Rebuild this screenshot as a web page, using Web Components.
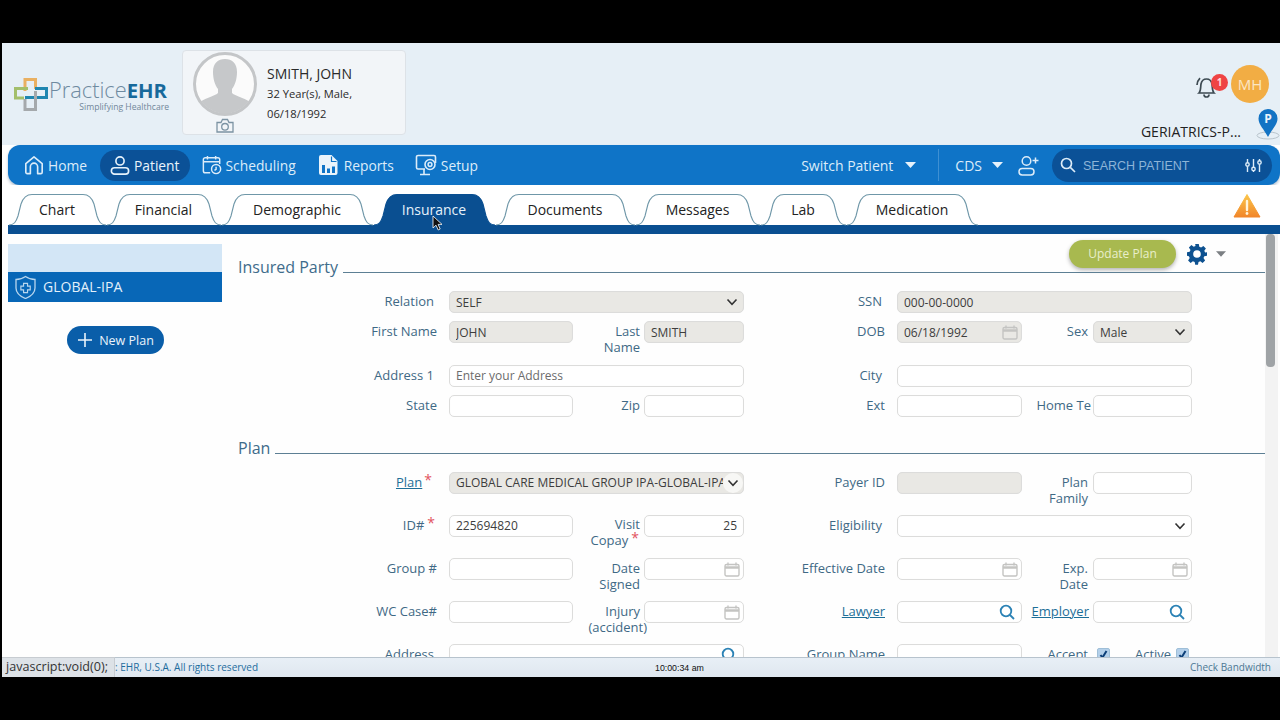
<!DOCTYPE html>
<html lang="en"><head><meta charset="utf-8"><title>PracticeEHR</title>
<style>
html,body{margin:0;padding:0;background:#000;height:720px;overflow:hidden;font-family:"Open Sans","Noto Sans",sans-serif}
body{padding-top:43px;box-sizing:border-box}
</style>
<script>
const define=(name,render)=>customElements.define(name,class extends HTMLElement{
  connectedCallback(){if(!this.shadowRoot){this.attachShadow({mode:'open'}).innerHTML=render(this)}}
});
const chevron=`<svg width="12" height="8" viewBox="0 0 12 8" fill="none" stroke="#333" stroke-width="1.6"><path d="M1.5 1.5 6 6.3l4.5-4.8"/></svg>`;
const calendar=`<svg width="16" height="15" viewBox="0 0 16 15" fill="none" stroke="#c4c4c2" stroke-width="1.4"><rect x="1" y="2.5" width="14" height="11.5" rx="1.5"/><path d="M1 5.5h14" stroke-width="2.4"/><path d="M4 .5v3M12 .5v3"/></svg>`;
const searchI=`<svg width="16" height="16" viewBox="0 0 16 16" fill="none" stroke="#2b82b5" stroke-width="1.8"><circle cx="7" cy="7" r="5.3"/><path d="m11 11 4 4"/></svg>`;
const caret=(c,w=11)=>`<svg width="${w}" height="6" viewBox="0 0 11 6" style="display:block"><path d="M0 0h11L5.5 6z" fill="${c}"/></svg>`;
const icons={
 home:`<svg width="20" height="22" viewBox="0 0 22 22" fill="none" stroke="#dcecf9" stroke-width="1.8" stroke-linejoin="round"><path d="M2 9.5 11 2l9 7.5V19a1.500 1.500 0 0 1-1.500 1.500H15V13a4 4 0 0 0-8 0v7.500H3.500A1.500 1.500 0 0 1 2 19z"/></svg>`,
 patient:`<svg width="20" height="22" viewBox="0 0 22 22" fill="none" stroke="#e6f2fb" stroke-width="1.800"><circle cx="11" cy="6.500" r="4.500"/><rect x="1.500" y="14" width="19" height="7" rx="3.500"/></svg>`,
 sched:`<svg width="20" height="22" viewBox="0 0 22 22" fill="none" stroke="#dcecf9" stroke-width="1.600"><path d="M9 19.500H3.500A2 2 0 0 1 1.500 17.500V5A2 2 0 0 1 3.500 3h14a2 2 0 0 1 2 2v5"/><path d="M1.500 7.500h18M6 1v4M15 1v4"/><circle cx="15.500" cy="15.500" r="5"/><path d="M15.500 13v2.700l-1.800 1.300"/></svg>`,
 reports:`<svg width="22" height="22" viewBox="0 0 22 22"><path d="M3 1h10.500l6 6V19a2 2 0 0 1-2 2H3a2 2 0 0 1-2-2V3a2 2 0 0 1 2-2z" fill="#eaf4fb"/><path d="M13.500 2.500v5h5" fill="none" stroke="#0f74c7" stroke-width="1.200"/><path d="M4 11h3v8H4zM9 14.500h3V19H9zM14 12.500h3V19h-3z" fill="#0f74c7"/></svg>`,
 setup:`<svg width="22" height="22" viewBox="0 0 22 22" fill="none" stroke="#dcecf9" stroke-width="1.600"><path d="M20.500 9V3A1.500 1.500 0 0 0 19 1.500H3A1.500 1.500 0 0 0 1.500 3v10.500A1.500 1.500 0 0 0 3 15h7"/><path d="M5 20.500h10M9 15v5.500"/><circle cx="15" cy="10.500" r="5"/><circle cx="15" cy="10.500" r="1.900" stroke-width="1.500"/></svg>`
};
define('ehr-app',()=>`<style>:host{display:flex;flex-direction:column;height:634px;margin-left:2px;background:#fff;overflow:hidden;position:relative}</style><slot></slot>`);

define('app-header',()=>`<style>:host{display:flex;height:102px;background:#e6eff6;position:relative;flex:none}
.l{padding:7px 0 0 180px;display:flex}
.r{margin-left:auto;display:flex;flex-direction:column;align-items:flex-end}</style>
<slot name="logo"></slot><div class="l"><slot name="card"></slot></div><div class="r"><slot name="tools"></slot></div>`);

define('ehr-logo',()=>`<style>:host{position:absolute;left:12px;top:34px;display:flex;width:155px;color:#6b8497}
svg{flex:none;margin-right:1px}
.t{display:flex;flex-direction:column;align-items:flex-end;width:120px}
.n{width:120px;font-size:21.800px;line-height:26px;font-weight:300;color:#6e8aa0;white-space:nowrap;font-family:"Open Sans"}
b{color:#17699b;font-weight:700;font-size:20.300px}
.s{font-size:8.600px;line-height:9px;color:#71879a}</style>
<svg width="34" height="34" viewBox="0 0 34 34" fill="none" stroke-width="3"><path d="M11 14V2.500h10.500V12" stroke="#e9b062"/><path d="M14 11.500H1.500V21H10" stroke="#a3bf6c"/><path d="M21 11.500h11.500V20.500H11" stroke="#1f86b0"/><path d="M11 22v10.500h10.500V14" stroke="#a5a9ac"/></svg>
<div class="t"><div class="n">Practice<b>EHR</b></div><div class="s">Simplifying Healthcare</div></div>`);

define('patient-card',()=>`<style>:host{display:flex;box-sizing:border-box;width:224px;height:85px;background:#f2f5f8;border:1px solid #dde2e7;border-radius:4px;position:relative;color:#222}
.a{width:84px;flex:none;display:flex;flex-direction:column;align-items:center;padding-top:1px}
.n{font-size:14px;line-height:20px;margin-top:13px;color:#2a2a2a}
.d{font-size:11.200px;line-height:20px;color:#2a2a2a}</style>
<div class="a"><svg width="64" height="64" viewBox="0 0 64 64"><defs><clipPath id="c"><circle cx="32" cy="32" r="29.500"/></clipPath></defs><circle cx="32" cy="32" r="30.500" fill="#fbfbfb" stroke="#c4c6c8" stroke-width="3"/><g clip-path="url(#c)" fill="#c6c8ca"><path d="M20 20c0-9 5-13 12-13s12 4 12 13c0 7-2 13-5 17v4c3 3 16 6 20 11v12H5V52c4-5 17-8 20-11v-4c-3-4-5-10-5-17z"/></g></svg>
<svg width="18" height="15" viewBox="0 0 18 15" fill="none" stroke="#7c93a3" stroke-width="1.300" style="margin-top:2px"><path d="M1 4.500h4L6.500 1.500h5L13 4.500h4V14H1z"/><circle cx="9" cy="8.800" r="3.300"/></svg></div>
<div class="i"><div class="n"><slot name="name"></slot></div><div class="d"><slot name="age"></slot></div><div class="d"><slot name="dob"></slot></div></div>`);

define('header-tools',()=>`<style>:host{display:block;height:102px;position:relative;width:140px}
.row{display:flex;justify-content:flex-end;align-items:center;padding:22px 11px 0 0;height:38px}
.bell{position:relative;width:30px;height:30px;margin-top:5px}
.badge{position:absolute;left:18px;top:2px;width:17px;height:17px;border-radius:50%;background:#ef4444;color:#ffdcdc;font-size:10px;font-weight:700;line-height:17px;text-align:center}
.mh{width:38px;height:38px;border-radius:50%;background:#f2ad44;color:#fbe6c4;font-size:15px;line-height:38px;text-align:center;margin-left:8px}
.loc{display:flex;justify-content:flex-end;align-items:flex-end;height:30px;margin-top:7px}
.g{font-size:14px;line-height:20px;color:#222;margin-right:15px;white-space:nowrap;margin-bottom:-2px}</style>
<div class="row"><div class="bell"><svg width="30" height="30" viewBox="0 0 30 30" fill="none" stroke="#3d4a52" stroke-width="1.700"><path d="M6 21c2-2 1.500-6 2-9 .6-3.200 3-5 5.500-5S18.400 8.800 19 12c.5 3 0 7 2 9z"/><path d="M11 22.500a2.500 2.500 0 0 0 5 0"/><path d="M4 13c.2-3 1.200-5 3-6.800"/></svg><span class="badge">1</span></div><div class="mh">MH</div></div>
<div class="loc"><span class="g"><slot></slot></span><svg width="24" height="31" viewBox="0 0 24 31"><ellipse cx="12" cy="26.500" rx="11" ry="3.500" fill="none" stroke="#b9c4cc" stroke-width="1"/><path d="M12 28C8 20 2.500 16 2.500 9.500a9.500 9.500 0 0 1 19 0C21.500 16 16 20 12 28z" fill="#1273c4"/><text x="12" y="14" text-anchor="middle" font-family="Open Sans" font-size="12" font-weight="700" fill="#eaf4fb">P</text></svg></div>`);

define('main-nav',()=>`<style>:host{display:flex;align-items:center;flex:none;height:40px;margin-left:6px;padding-left:6px;background:#0f74c7;border-radius:12px;box-shadow:0 2px 3px rgba(0,50,100,.3);gap:2px;color:#dcecf9;position:relative;box-sizing:border-box}
.r{margin-left:auto;display:flex;align-items:center;padding-right:8px;font-size:14px}
.sw{margin-right:12px}.d{width:1px;height:32px;background:#3e90d3;margin:0 16px 0 22px}
.cds{margin-right:10px}.cd2{margin-right:15px}
.s{display:flex;align-items:center;box-sizing:border-box;width:220px;height:33px;margin-left:13px;border-radius:17px;background:#0b5197;padding:0 10px 0 8px;color:#8db4d8;font:12.500px "Liberation Sans",sans-serif}
.s span{margin-left:7px;padding-top:1px}.s svg:last-child{margin-left:auto}</style>
<slot></slot><div class="r"><span class="sw">Switch Patient</span>${caret('#e6f2fb')}<div class="d"></div><span class="cds">CDS</span><span class="cd2">${caret('#e6f2fb')}</span>
<svg width="21" height="21" viewBox="0 0 21 21" fill="none" stroke="#dcecf9" stroke-width="1.500"><circle cx="8.500" cy="6" r="4.300"/><rect x="1" y="13.500" width="15" height="6.500" rx="3.200"/><path d="M14.500 5.500h6M17.500 2.500v6"/></svg>
<div class="s"><svg width="16" height="16" viewBox="0 0 16 16" fill="none" stroke="#dcecf9" stroke-width="1.700"><circle cx="6.500" cy="6.500" r="5"/><path d="m10.300 10.300 4.700 4.700"/></svg><span><slot name="search"></slot></span>
<svg width="17" height="15" viewBox="0 0 17 15" fill="none" stroke="#dcecf9" stroke-width="1.400"><path d="M2.500 1v3.500M2.500 8.500V14M8.500 1v8M8.500 13v1M14.500 1v1.500M14.500 6.500V14"/><circle cx="2.500" cy="6.500" r="1.700"/><circle cx="8.500" cy="11" r="1.700"/><circle cx="14.500" cy="4.500" r="1.700"/></svg></div></div>`);

define('nav-item',h=>`<style>:host{display:flex;align-items:center;height:31px;padding:0 10px;gap:4px;border-radius:16px;font-size:13.800px;${h.hasAttribute('active')?'background:#0b5197;color:#eaf4fb;':''}white-space:nowrap}svg{display:block}</style>${icons[h.getAttribute('icon')]}<slot></slot>`);

define('tab-bar',()=>`<style>:host{display:flex;flex:none;height:40px;box-sizing:border-box;padding:9px 0 0 8.500px;gap:5px;background:#fff;position:relative;align-items:flex-end}
.w{margin-left:auto;margin-right:19px;align-self:flex-start;margin-top:-1px}</style><slot></slot><svg class="w" width="28" height="25" viewBox="0 0 28 25"><defs><linearGradient id="w" x1="0" y1="0" x2="0" y2="1"><stop offset="0" stop-color="#fbc64a"/><stop offset="1" stop-color="#f1862a"/></linearGradient></defs><path d="M14 1.500 27 24H1z" fill="url(#w)" stroke="url(#w)" stroke-linejoin="round"/><path d="M14 8v9" stroke="#fff5dc" stroke-width="2.400" stroke-linecap="round"/><circle cx="14" cy="20.500" r="1.400" fill="#fff5dc"/></svg>`);

define('tab-item',h=>{const w=+h.getAttribute('w'),a=h.hasAttribute('active');
 const d=`M-2 31C3 31 5 28 7 22L10 10C12 4 15 .5 21 .5L${w-21} .5C${w-15} .5 ${w-12} 4 ${w-10} 10L${w-7} 22C${w-5} 28 ${w-3} 31 ${w+2} 31`;
 return `<style>:host{display:flex;align-items:center;justify-content:center;position:relative;width:${w}px;height:31px;flex:none;font-size:14px;color:${a?'#e6f2fb':'#222'}}
svg{position:absolute;left:0;top:0;overflow:visible}span{position:relative}</style>
<svg width="${w}" height="31" viewBox="0 0 ${w} 31" fill="${a?'#0a4f91':'#fff'}" stroke="${a?'#0a4f91':'#6f97a8'}" stroke-width="1.100"><path d="${d}"/></svg><span><slot></slot></span>`});

define('blue-rule',()=>`<style>:host{display:block;flex:none;height:9px;margin-left:6px;background:#0a4f91}</style>`);

define('work-area',()=>`<style>:host{display:flex;flex:1;min-height:0;overflow:hidden;background:#fefefe}</style><slot></slot>`);

define('side-panel',()=>`<style>:host{display:block;flex:none;width:214px;margin-left:6px;padding-top:10px}
.t{height:28px;background:#d3e6f6}
.p{display:flex;align-items:center;height:30px;background:#0867b7;color:#e3f0fa;font-size:14px;font-weight:400;padding:0 0 2px 6px;box-sizing:border-box}
.p svg{margin:2px 6px 0 0}
.b{display:flex;align-items:center;justify-content:center;gap:6px;width:97px;height:28px;margin:24px 0 0 59px;border-radius:14px;background:#0a5ea9;color:#eaf4fb;font-size:12.500px}</style>
<div class="t"></div><div class="p"><svg width="23" height="24" viewBox="0 0 23 24" fill="none" stroke="#b8d6ee" stroke-width="1.300"><path d="M11.500 1.500c3 2.200 6 3 9.500 3V13c0 5-4.500 8.500-9.500 10.500C6.500 21.500 2 18 2 13V4.500c3.500 0 6.500-.8 9.500-3z"/><path d="M9.300 7.500h4.400v3h3v4.300h-3v3H9.300v-3h-3v-4.300h3z" transform="translate(1.200 1.600) scale(.9)"/></svg><slot name="plan"></slot></div>
<div class="b"><svg width="16" height="16" viewBox="0 0 16 16" stroke="#eaf4fb" stroke-width="1.600"><path d="M8 1v14M1 8h14"/></svg><slot name="btn"></slot></div>`);

define('form-pane',()=>`<style>:host{display:block;flex:1;min-width:0;padding:6px 0 0 16px;box-sizing:border-box;overflow:hidden;height:423px}</style><slot></slot>`);

define('plan-toolbar',()=>`<style>:host{display:flex;justify-content:flex-end;align-items:center;height:28px;padding-right:39px}
.b{width:107px;height:28px;border-radius:14px;background:#a8b94f;color:#e8eecb;font-size:12px;line-height:28px;text-align:center;box-shadow:0 2px 4px rgba(0,0,0,.3);margin-right:10px}
.c{margin:0 0 0 8px}</style><div class="b"><slot></slot></div>
<svg width="22" height="22" viewBox="0 0 22 22"><path fill="#0d5190" fill-rule="evenodd" d="M9.200 1h3.600l.5 2.700 1.800.8 2.300-1.600 2.500 2.500-1.600 2.300.8 1.800L21 9.200v3.600l-2.700.5-.8 1.800 1.600 2.300-2.500 2.500-2.300-1.600-1.800.8-.5 2.700H9.200l-.5-2.700-1.800-.8-2.300 1.600-2.500-2.500 1.600-2.300-.8-1.800L1 12.800V9.200l2.700-.5.8-1.800-1.600-2.300 2.500-2.500 2.300 1.600 1.800-.8zM11 7.200a3.800 3.800 0 1 0 0 7.600 3.800 3.800 0 0 0 0-7.600z"/></svg><span class="c">${caret('#7b7f83',10)}</span>`);

define('section-head',()=>`<style>:host{display:flex;height:22px;margin:var(--m,0) 0 13px;font-size:16px;line-height:22px;color:#3f6c8b;white-space:nowrap}
i{flex:1;height:1px;margin:16px 0 0 5px;background:#5d7f94}</style><slot></slot><i></i>`);

define('form-grid',h=>`<style>:host{display:grid;grid-template-columns:211px 124px 71px 100px 153px 125px 71px 99px;grid-template-rows:${h.getAttribute('rows')};row-gap:8px}</style><slot></slot>`);

define('req-star',()=>`<style>:host{color:#e2545f;font-size:14px;position:relative;top:-2px;margin:0 var(--r,0) 0 var(--l,3px)}</style>*`);

define('f-label',h=>`<style>:host{display:block;box-sizing:border-box;padding:2px ${h.getAttribute('pr')||(h.hasAttribute('wide')?15:12)}px 0 0;text-align:right;font-size:13px;line-height:16px;color:#3f6985;white-space:nowrap;overflow:${h.hasAttribute('clip')?'hidden':'visible'}}
a{color:#1d6f98;text-decoration:underline}</style>
${h.hasAttribute('link')?'<a><slot></slot></a>':'<slot></slot>'}<slot name="after"></slot>`);

define('f-input',h=>{const icon=h.getAttribute('icon'),dis=h.hasAttribute('disabled'),fade=h.hasAttribute('fade');
 const ic=icon=='select'?chevron:icon=='cal'?calendar:icon=='search'?searchI:'';
 const pad=icon=='select'?(fade?0:5):icon=='cal'?3:6;
 return `<style>:host{display:flex;align-items:center;grid-column:span ${h.getAttribute('span')||1};box-sizing:border-box;height:22px;border:1px solid #dcdcdb;border-radius:5px;background:${dis?'#e9e8e4':'#fff'};padding:0 ${pad}px 0 6px;font-size:12px;color:#3d3d3d;min-width:0;box-shadow:inset 0 0 1px rgba(0,0,0,.04);overflow:hidden}
.v{flex:1;min-width:0;overflow:hidden;white-space:nowrap;text-align:${h.getAttribute('align')||'left'}}.p{color:#6c6c6c}
.up{padding-bottom:2px}
.i{display:flex;flex:none;margin-left:2px;align-items:center;justify-content:center}
.f{width:20px;height:20px;margin:0;background:#f7f7f5;border-radius:10px}</style><div class="v ${h.hasAttribute('ph')?'p':''} ${h.hasAttribute('up')?'up':''}"><slot></slot></div>${ic?`<span class="i ${fade?'f':''}">${ic}</span>`:''}`});

define('f-check',()=>`<style>:host{display:inline-block;box-sizing:border-box;width:13px;height:13px;margin-top:2px;border-radius:2px;background:#b4d0ea;border:1px solid #9fbfd8}svg{display:block}</style><svg width="11" height="11" viewBox="0 0 11 11" fill="none" stroke="#0d3f78" stroke-width="2"><path d="m2.500 6 2 2.500L8.500 2"/></svg>`);
define('check-cell',()=>`<style>:host{display:flex;align-items:flex-start;font-size:13px;line-height:16px;color:#3f6985;padding:2px 0 0 4px;white-space:nowrap}.x{margin-left:25px;margin-right:5px}</style><slot name="a"></slot><span class="x"><slot name="l"></slot></span><slot name="b"></slot>`);

define('scroll-rail',()=>`<style>:host{display:block;flex:none;width:13px;margin-right:2px;background:#f3f3f3}i{display:block;width:9px;height:133px;margin-left:1px;border-radius:4px;background:#9fa3a6}</style><i></i>`);

define('status-bar',()=>`<style>:host{display:flex;align-items:center;flex:none;height:20px;box-sizing:border-box;border-top:1px solid #b7c3cd;background:linear-gradient(#e8eff6,#dfe7ef);font-size:10px;position:relative;padding:0 0 2px 113px;color:#1d6c9e}
.t{position:absolute;left:653px;top:3px;font:8.800px/14px "Liberation Sans",sans-serif;color:#111}
.c{margin-left:auto;margin-right:9px;color:#4c7894}
.tip{position:absolute;left:0;top:-1px;box-sizing:border-box;width:113px;height:21px;background:#dde2e7;border:1px solid #c7ccd1;border-left:0;color:#333;font-size:12.600px;line-height:18px;padding-left:4px;white-space:nowrap;overflow:hidden}</style>
<span class="tip"><slot name="tip"></slot></span><span><slot name="copy"></slot></span><span class="t"><slot name="time"></slot></span><span class="c"><slot name="bw"></slot></span>`);

define('mouse-cursor',()=>`<style>:host{position:absolute;left:430px;top:171px;display:block;width:11px;height:16px}</style><svg width="11" height="16" viewBox="0 0 11 16"><path d="M1 1v12l3-2.800L6.200 15l2-1-2.100-4.600H10z" fill="#111" stroke="#fff" stroke-width=".8"/></svg>`);
</script></head>
<body>
<ehr-app>
  <app-header>
    <ehr-logo slot="logo"></ehr-logo>
    <patient-card slot="card"><span slot="name">SMITH, JOHN</span><span slot="age">32 Year(s), Male,</span><span slot="dob">06/18/1992</span></patient-card>
    <header-tools slot="tools">GERIATRICS-P...</header-tools>
  </app-header>
  <main-nav>
    <nav-item icon="home" style="margin-right:1px">Home</nav-item><nav-item icon="patient" active>Patient</nav-item><nav-item icon="sched">Scheduling</nav-item><nav-item icon="reports">Reports</nav-item><nav-item icon="setup" style="margin-left:-1px">Setup</nav-item>
    <span slot="search">SEARCH PATIENT</span>
  </main-nav>
  <tab-bar>
    <tab-item w="93">Chart</tab-item><tab-item w="110">Financial</tab-item><tab-item w="147">Demographic</tab-item><tab-item w="117" active>Insurance</tab-item><tab-item w="135">Documents</tab-item><tab-item w="120">Messages</tab-item><tab-item w="81">Lab</tab-item><tab-item w="127">Medication</tab-item>
  </tab-bar>
  <blue-rule></blue-rule>
  <work-area>
    <side-panel><span slot="plan">GLOBAL-IPA</span><span slot="btn">New Plan</span></side-panel>
    <form-pane>
      <plan-toolbar>Update Plan</plan-toolbar>
      <section-head style="--m:-12px">Insured Party</section-head>
      <form-grid rows="22px 36px 22px 22px">
        <f-label wide>Relation</f-label><f-input span="3" disabled icon="select">SELF</f-input><f-label wide>SSN</f-label><f-input span="3" disabled>000-00-0000</f-input>
        <f-label>First Name</f-label><f-input disabled>JOHN</f-input><f-label pr="4">Last<br>Name</f-label><f-input disabled>SMITH</f-input><f-label>DOB</f-label><f-input disabled icon="cal">06/18/1992</f-input><f-label pr="5">Sex</f-label><f-input disabled icon="select">Male</f-input>
        <f-label wide>Address 1</f-label><f-input span="3" ph up>Enter your Address</f-input><f-label wide>City</f-label><f-input span="3"></f-input>
        <f-label>State</f-label><f-input></f-input><f-label pr="4">Zip</f-label><f-input></f-input><f-label>Ext</f-label><f-input></f-input><f-label pr="2" clip>Home Te</f-label><f-input></f-input>
      </form-grid>
      <section-head style="--m:20px">Plan</section-head>
      <form-grid rows="35px 35px 35px 35px 22px">
        <f-label pr="17" link style="--l:2px">Plan<req-star slot="after"></req-star></f-label><f-input span="3" disabled icon="select" fade up>GLOBAL CARE MEDICAL GROUP IPA-GLOBAL-IPA</f-input><f-label>Payer ID</f-label><f-input disabled></f-input><f-label pr="5">Plan<br>Family</f-label><f-input></f-input>
        <f-label pr="14">ID#<req-star></req-star></f-label><f-input up>225694820</f-input><f-label pr="4" style="line-height:15px;--r:1px">Visit<br>Copay<req-star></req-star></f-label><f-input align="right" up>25</f-input><f-label wide>Eligibility</f-label><f-input span="3" icon="select"></f-input>
        <f-label>Group #</f-label><f-input></f-input><f-label pr="4">Date<br>Signed</f-label><f-input icon="cal"></f-input><f-label>Effective Date</f-label><f-input icon="cal"></f-input><f-label pr="5">Exp.<br>Date</f-label><f-input icon="cal"></f-input>
        <f-label>WC Case#</f-label><f-input></f-input><f-label pr="4">Injury<br><span style="display:inline-block;margin-right:-7px">(accident)</span></f-label><f-input icon="cal"></f-input><f-label link>Lawyer</f-label><f-input icon="search"></f-input><f-label link pr="4">Employer</f-label><f-input icon="search"></f-input>
        <f-label wide>Address</f-label><f-input span="3" icon="search"></f-input><f-label>Group Name</f-label><f-input></f-input><f-label pr="5">Accept</f-label><check-cell><f-check slot="a"></f-check><span slot="l">Active</span><f-check slot="b"></f-check></check-cell>
      </form-grid>
    </form-pane>
    <scroll-rail></scroll-rail>
  </work-area>
  <status-bar><span slot="tip">javascript:void(0);</span><span slot="copy">: EHR, U.S.A. All rights reserved</span><span slot="time">10:00:34 am</span><span slot="bw">Check Bandwidth</span></status-bar>
  <mouse-cursor></mouse-cursor>
</ehr-app>
</body></html>
